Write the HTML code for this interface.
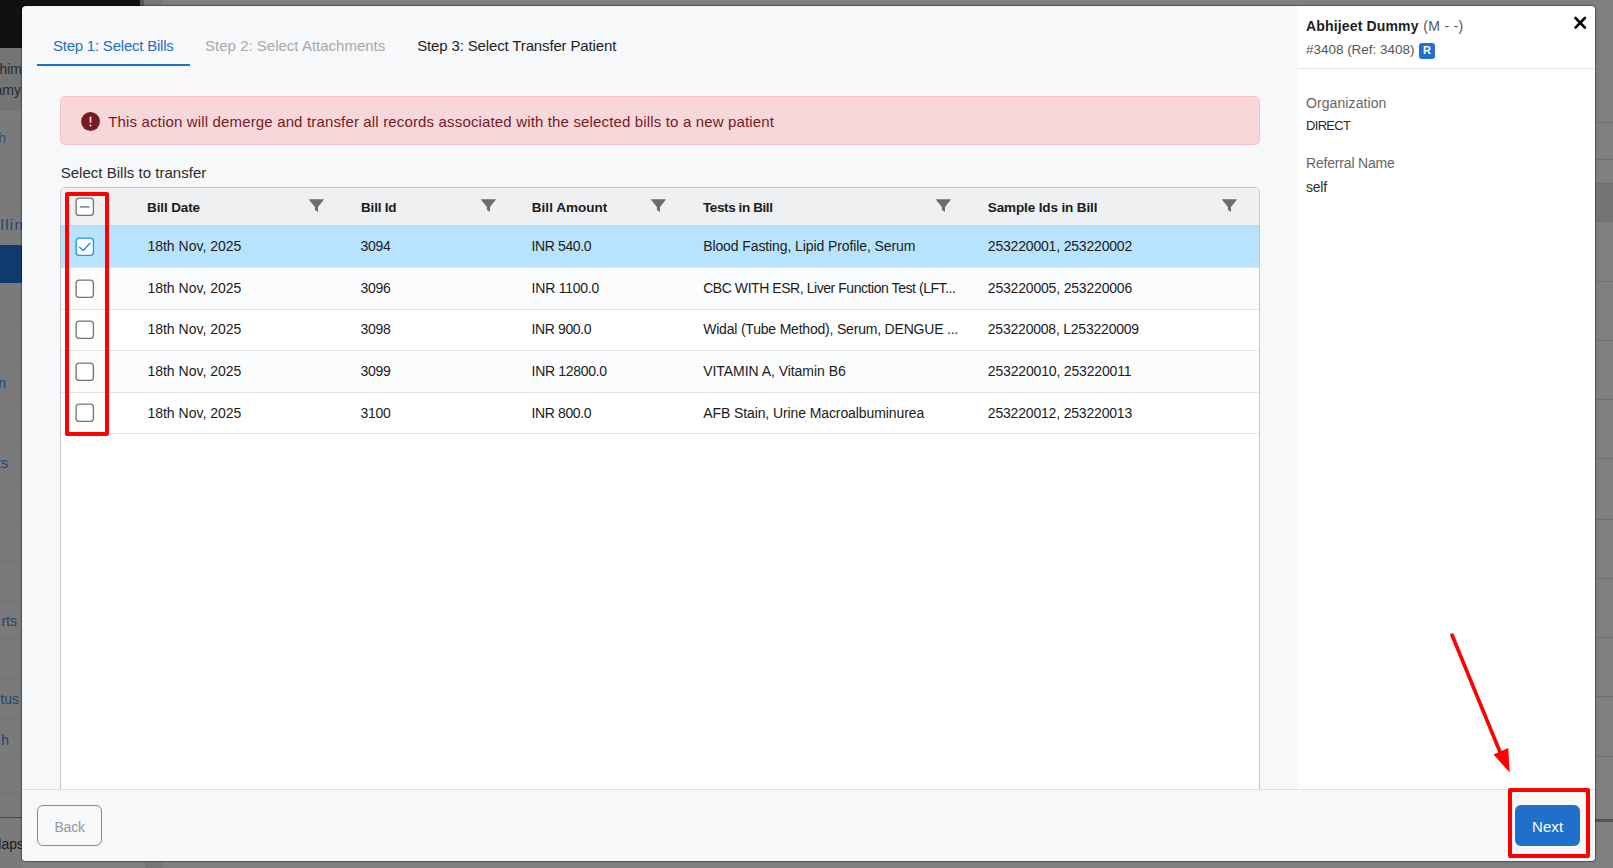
<!DOCTYPE html>
<html><head><meta charset="utf-8"><style>
html,body{margin:0;padding:0;width:1613px;height:868px;overflow:hidden;background:#7f7f7f;font-family:"Liberation Sans",sans-serif;}
.abs,.t,.ic,.cb{position:absolute;}
.t{white-space:nowrap;}
.bg{position:absolute;left:0;top:0;width:1613px;height:868px;background:#7f7f7f;}
.modal{position:absolute;left:22px;top:6px;width:1573px;height:855px;background:#f7f8fa;border-radius:4px;box-shadow:0 0 1px 0.5px rgba(0,0,0,0.35);}
.rpanel{position:absolute;left:1298px;top:6px;width:297px;height:783px;background:#ffffff;border-top-right-radius:4px;}
.footer{position:absolute;left:22px;top:789px;width:1573px;height:72px;background:#f7f8fa;border-top:1px solid #dde1e6;box-sizing:border-box;border-bottom-left-radius:4px;border-bottom-right-radius:4px;}
.alert{position:absolute;left:60px;top:96px;width:1200px;height:49px;background:#f8d7da;border:1px solid #f5c2c7;box-sizing:border-box;border-radius:5px;}
.tbl{position:absolute;left:60px;top:187px;width:1200px;height:620px;background:#fff;border:1px solid #c3c8ce;box-sizing:border-box;border-radius:5px;}
.thead{position:absolute;left:61px;top:188px;width:1198px;height:37px;background:#eff0f2;border-bottom:1px solid #cdd2d8;border-top-left-radius:4px;border-top-right-radius:4px;}
.cb{width:15px;height:15px;border:1.6px solid #6e7781;border-radius:3px;background:#fff;}
.cbon{border-color:#1e90ff;}
.badge{background:#2271cf;border-radius:3px;color:#fff;font-weight:bold;font-size:11px;line-height:15.6px;text-align:center;}
</style></head><body>
<div class="bg"></div><div class="abs" style="left:0;top:0;width:140px;height:48px;background:#111111"></div><div class="abs" style="left:140px;top:0;width:4px;height:8px;background:#5a5a5a"></div><div class="abs" style="left:144px;top:0;width:19px;height:8px;background:#767877"></div><div class="abs" style="left:0;top:48px;width:22px;height:820px;background:#7a7a7a"></div><div class="abs" style="left:0;top:48px;width:22px;height:63px;background:#737574"></div><div class="abs" style="left:0;top:111px;width:22px;height:8px;background:#7c7c7c"></div><div class="abs" style="left:0;top:205px;width:22px;height:1px;background:#747474"></div><div class="abs" style="left:0;top:322px;width:22px;height:1px;background:#747474"></div><div class="abs" style="left:0;top:361px;width:22px;height:1px;background:#747474"></div><div class="abs" style="left:0;top:403px;width:22px;height:1px;background:#747474"></div><div class="abs" style="left:0;top:442px;width:22px;height:1px;background:#747474"></div><div class="abs" style="left:0;top:481px;width:22px;height:1px;background:#747474"></div><div class="abs" style="left:0;top:521px;width:22px;height:1px;background:#747474"></div><div class="abs" style="left:0;top:560px;width:22px;height:1px;background:#747474"></div><div class="abs" style="left:0;top:600px;width:22px;height:1px;background:#747474"></div><div class="abs" style="left:0;top:639px;width:22px;height:1px;background:#747474"></div><div class="abs" style="left:0;top:679px;width:22px;height:1px;background:#747474"></div><div class="abs" style="left:0;top:719px;width:22px;height:1px;background:#747474"></div><div class="abs" style="left:0;top:758px;width:22px;height:1px;background:#747474"></div><div class="abs" style="left:0;top:792px;width:22px;height:1px;background:#747474"></div><div class="abs" style="left:0;top:817px;width:22px;height:1px;background:#4a4a4a"></div><div class="abs" style="left:0;top:245px;width:22px;height:38px;background:#0f3a6e"></div><div class="t" style="right:1591px;top:59.1px;font-size:14px;line-height:20px;color:#2a2a30">him</div><div class="t" style="right:1592px;top:80.1px;font-size:14px;line-height:20px;color:#2a2a30">amy</div><div class="t" style="right:1607px;top:128.1px;font-size:14px;line-height:20px;color:#394f6b">h</div><div class="t" style="right:1607px;top:373.1px;font-size:14px;line-height:20px;color:#1e4378">n</div><div class="t" style="right:1605px;top:453.1px;font-size:14px;line-height:20px;color:#1e4378">ts</div><div class="t" style="right:1596px;top:611.1px;font-size:14px;line-height:20px;color:#1e4378">rts</div><div class="t" style="right:1594px;top:689.1px;font-size:14px;line-height:20px;color:#1e4378">tus</div><div class="t" style="right:1604px;top:730.1px;font-size:14px;line-height:20px;color:#1e4378">h</div><div class="t" style="right:1589px;top:834.1px;font-size:14px;line-height:20px;color:#1a1a1a">laps</div><div class="abs" style="left:1595px;top:183px;width:18px;height:39px;background:#737574"></div><div class="t" style="left:0.5px;top:214.8px;font-size:15px;line-height:20px;letter-spacing:1.3px;color:#1e4378">llin</div><div class="abs" style="left:1595px;top:122px;width:18px;height:1px;background:#6e6e6e"></div><div class="abs" style="left:1595px;top:159px;width:18px;height:1px;background:#6e6e6e"></div><div class="abs" style="left:1595px;top:183px;width:18px;height:1px;background:#6e6e6e"></div><div class="abs" style="left:1595px;top:221px;width:18px;height:1px;background:#6e6e6e"></div><div class="abs" style="left:1595px;top:281px;width:18px;height:1px;background:#6e6e6e"></div><div class="abs" style="left:1595px;top:340px;width:18px;height:1px;background:#6e6e6e"></div><div class="abs" style="left:1595px;top:399px;width:18px;height:1px;background:#6e6e6e"></div><div class="abs" style="left:1595px;top:458px;width:18px;height:1px;background:#6e6e6e"></div><div class="abs" style="left:1595px;top:519px;width:18px;height:1px;background:#6e6e6e"></div><div class="abs" style="left:1595px;top:578px;width:18px;height:1px;background:#6e6e6e"></div><div class="abs" style="left:1595px;top:637px;width:18px;height:1px;background:#6e6e6e"></div><div class="abs" style="left:1595px;top:696px;width:18px;height:1px;background:#6e6e6e"></div><div class="abs" style="left:1595px;top:756px;width:18px;height:1px;background:#6e6e6e"></div><div class="abs" style="left:1595px;top:819px;width:18px;height:3px;background:#555555"></div><div class="abs" style="left:145px;top:861px;width:18px;height:7px;background:#767676"></div><div class="modal"></div><div class="rpanel"></div><div class="t" style="left:52.90px;top:35.80px;font-size:15px;line-height:20px;letter-spacing:-0.216px;color:#1f6fcb;">Step 1: Select Bills</div>
<div class="t" style="left:205.10px;top:35.80px;font-size:15px;line-height:20px;letter-spacing:0.004px;color:#a6a8ab;">Step 2: Select Attachments</div>
<div class="t" style="left:417.20px;top:35.80px;font-size:15px;line-height:20px;letter-spacing:-0.143px;color:#1e1e1e;">Step 3: Select Transfer Patient</div>
<div class="abs" style="left:37px;top:64px;width:153px;height:2px;background:#1f6fcb"></div><div class="alert"></div><svg class="ic" style="left:81px;top:112px" width="19" height="19" viewBox="0 0 19 19"><circle cx="9.5" cy="9.5" r="9.4" fill="#751c23"/><rect x="8.6" y="4.6" width="1.8" height="6.4" rx="0.9" fill="#f8d7da"/><circle cx="9.5" cy="13.5" r="1.05" fill="#f8d7da"/></svg><div class="t" style="left:108.20px;top:112.40px;font-size:15px;line-height:20px;letter-spacing:0.155px;color:#741b25;">This action will demerge and transfer all records associated with the selected bills to a new patient</div>
<div class="t" style="left:60.70px;top:162.80px;font-size:15px;line-height:20px;letter-spacing:0.022px;color:#2b2b2b;">Select Bills to transfer</div>
<div class="tbl"></div><div class="thead"></div><div class="abs" style="left:61px;top:226.0px;width:1198px;height:41.0px;background:#b7e4fc"></div><div class="abs" style="left:61px;top:268.0px;width:1198px;height:40.6px;background:#fbfcfe"></div><div class="abs" style="left:61px;top:267.0px;width:1198px;height:1px;background:#e1e5ea"></div><div class="abs" style="left:61px;top:309.6px;width:1198px;height:40.6px;background:#ffffff"></div><div class="abs" style="left:61px;top:308.6px;width:1198px;height:1px;background:#e1e5ea"></div><div class="abs" style="left:61px;top:351.2px;width:1198px;height:41.0px;background:#fbfcfe"></div><div class="abs" style="left:61px;top:350.2px;width:1198px;height:1px;background:#e1e5ea"></div><div class="abs" style="left:61px;top:393.2px;width:1198px;height:40.4px;background:#ffffff"></div><div class="abs" style="left:61px;top:392.2px;width:1198px;height:1px;background:#e1e5ea"></div><div class="abs" style="left:61px;top:433px;width:1198px;height:1px;background:#e1e5ea"></div><svg class="ic" style="left:75.1px;top:196.5px" width="19.5" height="19.5" viewBox="0 0 19.5 19.5"><rect x="1.1" y="1.1" width="17.3" height="17.3" rx="3.2" fill="#fff" stroke="#6e7781" stroke-width="1.35"/><line x1="4.8" y1="9.9" x2="14.6" y2="9.9" stroke="#6e7781" stroke-width="1.4"/></svg>
<div class="t" style="left:147.10px;top:197.62px;font-size:13.5px;line-height:20px;letter-spacing:-0.137px;color:#1b1b1b;font-weight:bold;">Bill Date</div>
<div class="t" style="left:361.10px;top:197.62px;font-size:13.5px;line-height:20px;letter-spacing:-0.233px;color:#1b1b1b;font-weight:bold;">Bill Id</div>
<div class="t" style="left:531.80px;top:197.62px;font-size:13.5px;line-height:20px;letter-spacing:0.030px;color:#1b1b1b;font-weight:bold;">Bill Amount</div>
<div class="t" style="left:703.00px;top:197.62px;font-size:13.5px;line-height:20px;letter-spacing:-0.400px;color:#1b1b1b;font-weight:bold;">Tests in Bill</div>
<div class="t" style="left:987.80px;top:197.62px;font-size:13.5px;line-height:20px;letter-spacing:-0.129px;color:#1b1b1b;font-weight:bold;">Sample Ids in Bill</div>
<svg class="ic" style="left:309.3px;top:199.1px" width="16" height="14" viewBox="0 0 16 14"><path d="M0.3 0.3 H14.5 Q14.9 0.5 14.6 1.1 L9 8.1 V12.3 Q8.9 13 8.2 12.6 L6.3 11.3 Q5.9 11 5.9 10.5 V8.1 L0.2 1.1 Q-0.1 0.5 0.3 0.3 Z" fill="#6b6d70"/></svg>
<svg class="ic" style="left:480.5px;top:199.1px" width="16" height="14" viewBox="0 0 16 14"><path d="M0.3 0.3 H14.5 Q14.9 0.5 14.6 1.1 L9 8.1 V12.3 Q8.9 13 8.2 12.6 L6.3 11.3 Q5.9 11 5.9 10.5 V8.1 L0.2 1.1 Q-0.1 0.5 0.3 0.3 Z" fill="#6b6d70"/></svg>
<svg class="ic" style="left:651.3px;top:199.1px" width="16" height="14" viewBox="0 0 16 14"><path d="M0.3 0.3 H14.5 Q14.9 0.5 14.6 1.1 L9 8.1 V12.3 Q8.9 13 8.2 12.6 L6.3 11.3 Q5.9 11 5.9 10.5 V8.1 L0.2 1.1 Q-0.1 0.5 0.3 0.3 Z" fill="#6b6d70"/></svg>
<svg class="ic" style="left:936.3px;top:199.1px" width="16" height="14" viewBox="0 0 16 14"><path d="M0.3 0.3 H14.5 Q14.9 0.5 14.6 1.1 L9 8.1 V12.3 Q8.9 13 8.2 12.6 L6.3 11.3 Q5.9 11 5.9 10.5 V8.1 L0.2 1.1 Q-0.1 0.5 0.3 0.3 Z" fill="#6b6d70"/></svg>
<svg class="ic" style="left:1221.5px;top:199.1px" width="16" height="14" viewBox="0 0 16 14"><path d="M0.3 0.3 H14.5 Q14.9 0.5 14.6 1.1 L9 8.1 V12.3 Q8.9 13 8.2 12.6 L6.3 11.3 Q5.9 11 5.9 10.5 V8.1 L0.2 1.1 Q-0.1 0.5 0.3 0.3 Z" fill="#6b6d70"/></svg>
<svg class="ic" style="left:75.1px;top:236.5px" width="19.5" height="19.5" viewBox="0 0 19.5 19.5"><rect x="1.1" y="1.1" width="17.3" height="17.3" rx="3.2" fill="#fff" stroke="#1e90ff" stroke-width="1.35"/><path d="M4.6 10.3 L8.3 13.4 L15.0 6.3" stroke="#1e90ff" stroke-width="1.5" fill="none" stroke-linecap="round" stroke-linejoin="round"/></svg>
<div class="t" style="left:147.40px;top:236.35px;font-size:14px;line-height:20px;letter-spacing:0.000px;color:#1b1b1b;">18th Nov, 2025</div>
<div class="t" style="left:360.40px;top:236.35px;font-size:14px;line-height:20px;letter-spacing:-0.233px;color:#1b1b1b;">3094</div>
<div class="t" style="left:531.60px;top:236.35px;font-size:14px;line-height:20px;letter-spacing:-0.388px;color:#1b1b1b;">INR 540.0</div>
<div class="t" style="left:703.20px;top:236.35px;font-size:14px;line-height:20px;letter-spacing:-0.100px;color:#1b1b1b;">Blood Fasting, Lipid Profile, Serum</div>
<div class="t" style="left:987.80px;top:236.35px;font-size:14px;line-height:20px;letter-spacing:-0.184px;color:#1b1b1b;">253220001, 253220002</div>
<svg class="ic" style="left:75.1px;top:278.5px" width="19.5" height="19.5" viewBox="0 0 19.5 19.5"><rect x="1.1" y="1.1" width="17.3" height="17.3" rx="3.2" fill="#fff" stroke="#6e7781" stroke-width="1.35"/></svg>
<div class="t" style="left:147.40px;top:277.85px;font-size:14px;line-height:20px;letter-spacing:0.000px;color:#1b1b1b;">18th Nov, 2025</div>
<div class="t" style="left:360.40px;top:277.85px;font-size:14px;line-height:20px;letter-spacing:-0.233px;color:#1b1b1b;">3096</div>
<div class="t" style="left:531.60px;top:277.85px;font-size:14px;line-height:20px;letter-spacing:-0.222px;color:#1b1b1b;">INR 1100.0</div>
<div class="t" style="left:703.20px;top:277.85px;font-size:14px;line-height:20px;letter-spacing:-0.443px;color:#1b1b1b;">CBC WITH ESR, Liver Function Test (LFT...</div>
<div class="t" style="left:987.80px;top:277.85px;font-size:14px;line-height:20px;letter-spacing:-0.184px;color:#1b1b1b;">253220005, 253220006</div>
<svg class="ic" style="left:75.1px;top:319.5px" width="19.5" height="19.5" viewBox="0 0 19.5 19.5"><rect x="1.1" y="1.1" width="17.3" height="17.3" rx="3.2" fill="#fff" stroke="#6e7781" stroke-width="1.35"/></svg>
<div class="t" style="left:147.40px;top:319.35px;font-size:14px;line-height:20px;letter-spacing:0.000px;color:#1b1b1b;">18th Nov, 2025</div>
<div class="t" style="left:360.40px;top:319.35px;font-size:14px;line-height:20px;letter-spacing:-0.233px;color:#1b1b1b;">3098</div>
<div class="t" style="left:531.60px;top:319.35px;font-size:14px;line-height:20px;letter-spacing:-0.388px;color:#1b1b1b;">INR 900.0</div>
<div class="t" style="left:703.20px;top:319.35px;font-size:14px;line-height:20px;letter-spacing:-0.200px;color:#1b1b1b;">Widal (Tube Method), Serum, DENGUE ...</div>
<div class="t" style="left:987.80px;top:319.35px;font-size:14px;line-height:20px;letter-spacing:-0.220px;color:#1b1b1b;">253220008, L253220009</div>
<svg class="ic" style="left:75.1px;top:361.5px" width="19.5" height="19.5" viewBox="0 0 19.5 19.5"><rect x="1.1" y="1.1" width="17.3" height="17.3" rx="3.2" fill="#fff" stroke="#6e7781" stroke-width="1.35"/></svg>
<div class="t" style="left:147.40px;top:360.85px;font-size:14px;line-height:20px;letter-spacing:0.000px;color:#1b1b1b;">18th Nov, 2025</div>
<div class="t" style="left:360.40px;top:360.85px;font-size:14px;line-height:20px;letter-spacing:-0.233px;color:#1b1b1b;">3099</div>
<div class="t" style="left:531.60px;top:360.85px;font-size:14px;line-height:20px;letter-spacing:-0.320px;color:#1b1b1b;">INR 12800.0</div>
<div class="t" style="left:703.20px;top:360.85px;font-size:14px;line-height:20px;letter-spacing:-0.045px;color:#1b1b1b;">VITAMIN A, Vitamin B6</div>
<div class="t" style="left:987.80px;top:360.85px;font-size:14px;line-height:20px;letter-spacing:-0.163px;color:#1b1b1b;">253220010, 253220011</div>
<svg class="ic" style="left:75.1px;top:402.5px" width="19.5" height="19.5" viewBox="0 0 19.5 19.5"><rect x="1.1" y="1.1" width="17.3" height="17.3" rx="3.2" fill="#fff" stroke="#6e7781" stroke-width="1.35"/></svg>
<div class="t" style="left:147.40px;top:402.65px;font-size:14px;line-height:20px;letter-spacing:0.000px;color:#1b1b1b;">18th Nov, 2025</div>
<div class="t" style="left:360.40px;top:402.65px;font-size:14px;line-height:20px;letter-spacing:-0.233px;color:#1b1b1b;">3100</div>
<div class="t" style="left:531.60px;top:402.65px;font-size:14px;line-height:20px;letter-spacing:-0.388px;color:#1b1b1b;">INR 800.0</div>
<div class="t" style="left:703.20px;top:402.65px;font-size:14px;line-height:20px;letter-spacing:-0.097px;color:#1b1b1b;">AFB Stain, Urine Macroalbuminurea</div>
<div class="t" style="left:987.80px;top:402.65px;font-size:14px;line-height:20px;letter-spacing:-0.184px;color:#1b1b1b;">253220012, 253220013</div>
<div class="footer"></div><div class="t" style="left:1306.10px;top:16.15px;font-size:14px;line-height:20px;letter-spacing:0.146px;color:#1e1e1e;font-weight:bold;">Abhijeet Dummy</div>
<div class="t" style="left:1423.30px;top:16.15px;font-size:14px;line-height:20px;letter-spacing:0.300px;color:#555555;">(M - -)</div>
<div class="t" style="left:1306.00px;top:39.92px;font-size:13.5px;line-height:20px;letter-spacing:-0.025px;color:#555555;">#3408 (Ref: 3408)</div>
<div class="abs badge" style="left:1419.2px;top:43.1px;width:15.6px;height:15.6px;">R</div><div class="abs" style="left:1298px;top:68px;width:297px;height:1px;background:#dfe3e8"></div><svg class="ic" style="left:1568px;top:10px" width="24" height="24" viewBox="1568 10 24 24"><path d="M1575.5 18.0 L1584.9 27.6 M1584.9 18.0 L1575.5 27.6" stroke="#000" stroke-width="2.6" stroke-linecap="round"/></svg><div class="t" style="left:1306.00px;top:92.85px;font-size:14px;line-height:20px;letter-spacing:0.091px;color:#666666;">Organization</div>
<div class="t" style="left:1306.00px;top:116.30px;font-size:13px;line-height:20px;letter-spacing:-0.680px;color:#2b2b2b;">DIRECT</div>
<div class="t" style="left:1306.00px;top:152.75px;font-size:14px;line-height:20px;letter-spacing:-0.183px;color:#666666;">Referral Name</div>
<div class="t" style="left:1306.00px;top:176.55px;font-size:14px;line-height:20px;letter-spacing:-0.233px;color:#2b2b2b;">self</div>
<div class="abs" style="left:37px;top:805px;width:63px;height:39px;border:1px solid #8a8a8a;border-radius:6px;"></div><div class="t" style="left:54.50px;top:817.15px;font-size:14px;line-height:20px;letter-spacing:-0.233px;color:#9a9a9a;">Back</div>
<div class="abs" style="left:1515px;top:805px;width:65px;height:41px;background:#1f6fcb;border-radius:6px;"></div><div class="t" style="left:1532.00px;top:816.50px;font-size:15px;line-height:20px;letter-spacing:0.067px;color:#ffffff;">Next</div>
<div class="abs" style="left:65px;top:192px;width:36px;height:236px;border:4px solid #ff0000;border-radius:2px;"></div><div class="abs" style="left:1508px;top:788px;width:74px;height:62px;border:4px solid #ff0000;border-radius:2px;"></div><svg class="ic" style="left:0;top:0" width="1613" height="868"><line x1="1452" y1="635" x2="1500" y2="752" stroke="#ff0000" stroke-width="3.6" stroke-linecap="round"/><path d="M1493.5 754.6 L1508.2 748.1 L1509.7 772.6 Z" fill="#ff0000"/></svg>
</body></html>
